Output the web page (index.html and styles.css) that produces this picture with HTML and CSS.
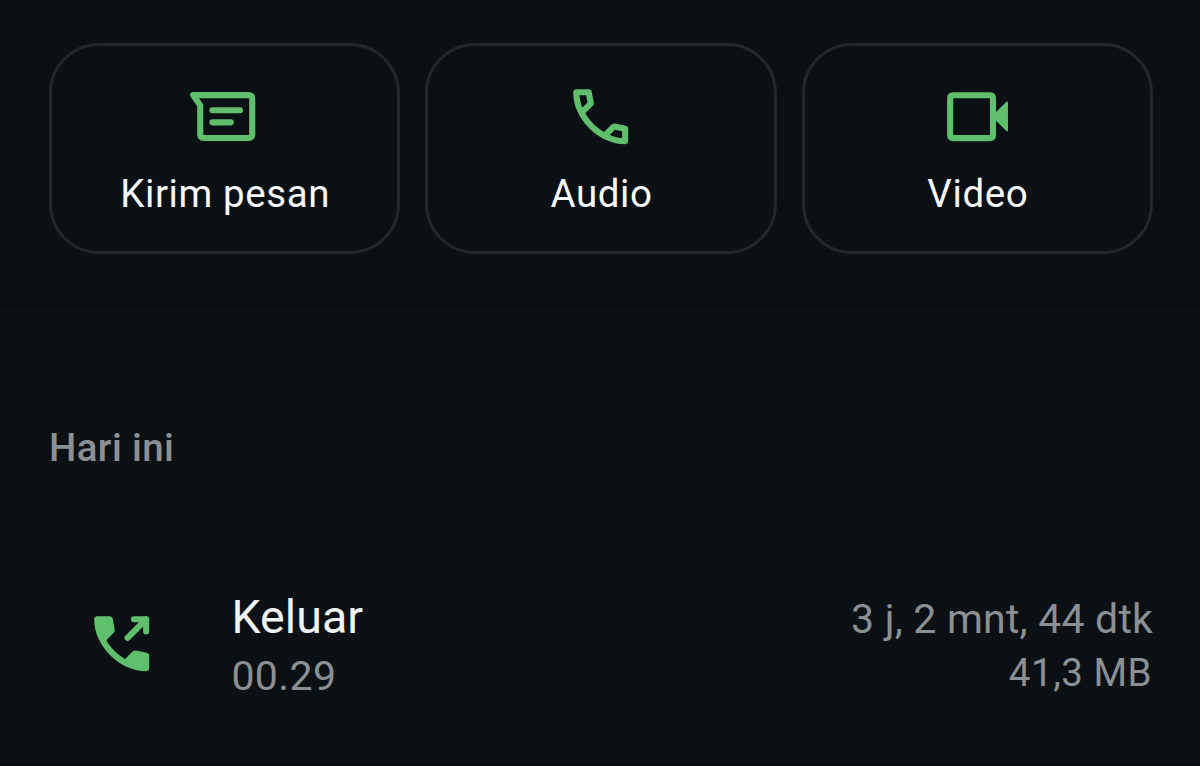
FILE: index.html
```
<!DOCTYPE html>
<html lang="id">
<head>
    <meta charset="UTF-8">
    <meta name="viewport" content="width=device-width, initial-scale=1.0">
    <title>Info panggilan</title>
    <link rel="stylesheet" href="styles.css">
</head>
<body>
    <!-- Action Buttons -->
    <div class="actions">
        <button class="action">
            <svg class="icon" viewBox="0 0 24 24" fill="none" stroke="currentColor" stroke-width="2" stroke-linecap="round" stroke-linejoin="round">
                <path d="M1.7 4.95H19.8q1.2 0 1.2 1.2v11.6q0 1.2-1.2 1.2H5.2q-1.2 0-1.2-1.2V8.3z"/>
                <path d="M8 9.9h9M8 13.85h6"/>
            </svg>
            <span>Kirim pesan</span>
        </button>
        <button class="action">
            <svg class="icon" viewBox="0 0 24 24" fill="currentColor">
                <path d="M19.95 21q-3.125 0-6.175-1.363t-5.55-3.862-3.863-5.55T3 4.05q0-.45.3-.75t.75-.3H8.1q.35 0 .625.238t.325.562l.65 3.5q.05.4-.025.675T9.4 8.45L6.975 10.9q.5.925 1.187 1.787t1.513 1.663q.775.775 1.625 1.438T13.1 17l2.35-2.35q.225-.225.588-.337t.712-.063l3.45.7q.35.1.575.363T21 15.9v4.05q0 .45-.3.75t-.75.3M6.025 9l1.65-1.65L7.25 5H5.025q.125 1.025.35 2.025T6.025 9m8.95 8.95q.975.425 1.988.675T19 18.95v-2.2l-2.35-.475z"/>
            </svg>
            <span>Audio</span>
        </button>
        <button class="action">
            <svg class="icon" viewBox="0 0 24 24" fill="currentColor">
                <path fill-rule="evenodd" d="M4 4h12q2 0 2 2v4.5l3.3-3.3q.6-.5.6.2v9q0 .7-.6.2L18 13.3V18q0 2-2 2H4q-2 0-2-2V6q0-2 2-2zm0 2v12h12V6z"/>
            </svg>
            <span>Video</span>
        </button>
    </div>

    <!-- Call Log -->
    <div class="log">
        <h2>Hari ini</h2>
        <div class="call">
            <svg class="icon" viewBox="0 0 24 24" fill="currentColor">
                <path d="M19.95 21q-3.125 0-6.175-1.363t-5.55-3.862-3.863-5.55T3 4.05q0-.45.3-.75t.75-.3H8.1q.35 0 .625.238t.325.562l.65 3.5q.05.4-.025.675T9.4 8.45L6.975 10.9q.5.925 1.187 1.787t1.513 1.663q.775.775 1.625 1.438T13.1 17l2.35-2.35q.225-.225.588-.337t.712-.063l3.45.7q.35.1.575.363T21 15.9v4.05q0 .45-.3.75t-.75.3"/>
                <path d="M13.9 10.1 20 4M16 4h4v4" fill="none" stroke="currentColor" stroke-width="2" stroke-linecap="round" stroke-linejoin="round"/>
            </svg>
            <div class="call-info">
                <div class="call-type">Keluar</div>
                <div class="call-time">00.29</div>
            </div>
            <div class="call-stats">
                <div class="duration">3 j, 2 mnt, 44 dtk</div>
                <div class="data-used">41,3 MB</div>
            </div>
        </div>
    </div>
</body>
</html>
```
FILE: styles.css
```
/* General Styles */
* {
    box-sizing: border-box;
}

body {
    margin: 0;
    height: 766px;
    display: flex;
    flex-direction: column;
    font-family: Roboto, sans-serif;
    background-color: #0b1014;
    color: #f1f4f5;
    border-bottom: 2px solid #070a0d;
    overflow: hidden;
}

.icon {
    display: block;
    flex: none;
    width: 73.4px;
    height: 73.4px;
    color: #5fbf6c;
}

/* Action Buttons */
.actions {
    display: grid;
    grid-template-columns: repeat(3, 1fr);
    gap: 25px;
    height: 303px;
    padding: 43px 47px 49px 49px;
}

.action {
    display: flex;
    flex-direction: column;
    align-items: center;
    padding: 34px 0 0;
    border: 3px solid #23272a;
    border-radius: 50px;
    background: none;
    color: #f7f9fa;
    font-family: inherit;
    font-size: 38.5px;
    line-height: 46px;
    letter-spacing: 0.6px;
}

.action span {
    margin-top: 17.5px;
    padding-left: 1px;
}

/* Call Log */
.log {
    flex: 1;
    padding: 122px 47px 0 49px;
    background: linear-gradient(to bottom, #090c10, #0b1014 9px);
}

.log h2 {
    margin: 0;
    color: #8b9094;
    font-size: 38.5px;
    font-weight: 500;
    line-height: 46px;
    letter-spacing: 0.4px;
}

.call {
    display: flex;
    align-items: flex-start;
    margin-top: 116px;
    padding-left: 36px;
}

.call .icon {
    margin-top: 19.5px;
}

.call-info {
    flex: 1;
    margin-left: 73px;
}

.call-type {
    font-size: 46.5px;
    line-height: 60px;
    letter-spacing: 0.1px;
}

.call-time {
    color: #8b9094;
    font-size: 41px;
    line-height: 58px;
    letter-spacing: 0.4px;
}

.call-stats {
    margin-top: 4px;
    color: #8b9094;
    text-align: right;
}

.duration {
    font-size: 41px;
    line-height: 56px;
    letter-spacing: 0.2px;
}

.data-used {
    padding-right: 1px;
    font-size: 38.5px;
    line-height: 52px;
    letter-spacing: 0.5px;
}
```
